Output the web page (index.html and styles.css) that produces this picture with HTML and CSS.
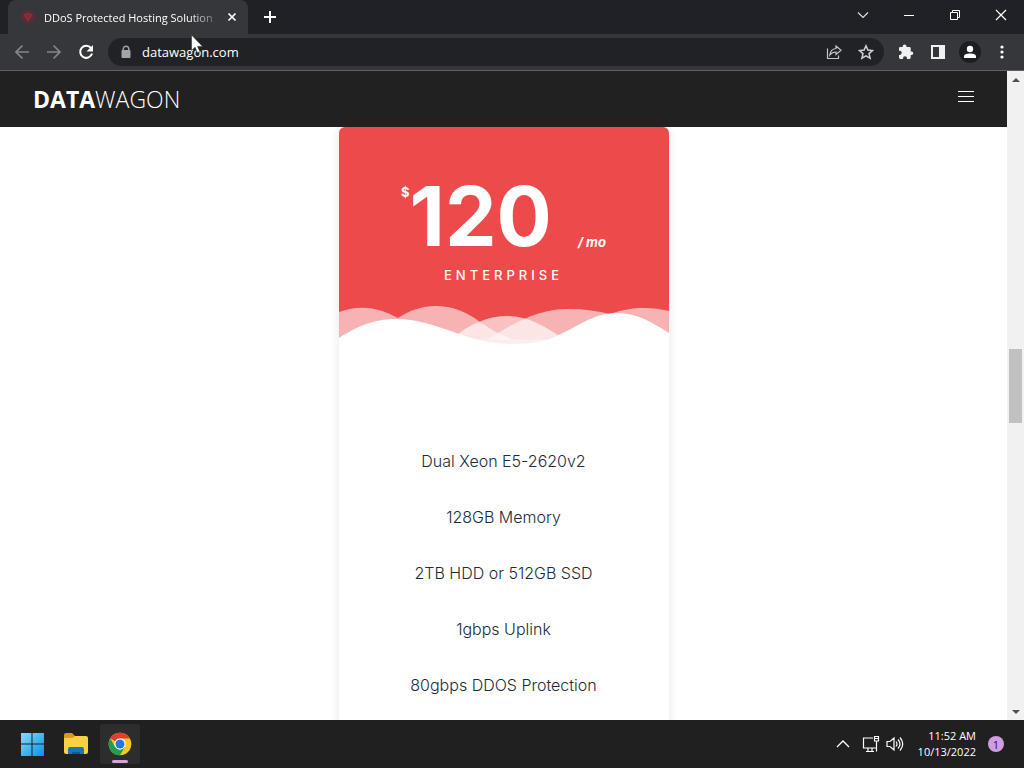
FILE: index.html
```html
<!DOCTYPE html>
<html lang="en">
<head>
<meta charset="utf-8">
<meta name="viewport" content="width=device-width, initial-scale=1">
<title>DDoS Protected Hosting Solution</title>
<link rel="stylesheet" href="styles.css">
</head>
<body>
<div class="tabstrip">
  <div class="tab">
    <svg class="favicon" width="16" height="16" viewBox="0 0 16 16"><circle cx="8" cy="8" r="7" fill="#5c2a32"/><path d="M4 6l4-2 4 2-4 6z" fill="#7d2c38" stroke="#8e3140"/></svg>
    <span class="tab-title">DDoS Protected Hosting Solution</span>
    <button class="icon-btn tab-close" aria-label="Close tab"><svg width="16" height="16" viewBox="0 0 16 16"><path d="M4.5 4.5l7 7m0-7l-7 7" stroke="#fff" stroke-width="1.7"/></svg></button>
  </div>
  <button class="icon-btn new-tab" aria-label="New tab"><svg width="16" height="16" viewBox="0 0 16 16"><path d="M8 2v12M2 8h12" stroke="#fff" stroke-width="2"/></svg></button>
  <div class="window-controls">
    <button class="icon-btn" aria-label="Search tabs"><svg width="12" height="12" viewBox="0 0 12 12"><path d="M1 3.500l5 5 5-5" fill="none" stroke="#ddd" stroke-width="1.2"/></svg></button>
    <button class="icon-btn" aria-label="Minimize"><svg width="12" height="12" viewBox="0 0 12 12"><path d="M1 6.500h10" stroke="#fff"/></svg></button>
    <button class="icon-btn" aria-label="Restore"><svg width="12" height="12" viewBox="0 0 12 12"><path d="M1.500 3.500h7v7h-7zM3.500 3.500v-2h7v7h-2" fill="none" stroke="#fff"/></svg></button>
    <button class="icon-btn" aria-label="Close"><svg width="12" height="12" viewBox="0 0 12 12"><path d="M1 1l10 10M11 1L1 11" stroke="#fff" stroke-width="1.2"/></svg></button>
  </div>
</div>

<div class="toolbar">
  <button class="icon-btn" aria-label="Back"><svg width="16" height="16" viewBox="0 0 16 16"><path d="M15 8H2m6.500-6.500L2 8l6.500 6.500" fill="none" stroke="#85868a" stroke-width="1.7"/></svg></button>
  <button class="icon-btn" aria-label="Forward"><svg width="16" height="16" viewBox="0 0 16 16"><path d="M1 8h13M7.500 1.500L14 8l-6.500 6.500" fill="none" stroke="#85868a" stroke-width="1.700"/></svg></button>
  <button class="icon-btn" aria-label="Reload"><svg width="16" height="16" viewBox="0 0 16 16"><path d="M13 4.200A6 6 0 1 0 14 9.500" fill="none" stroke="#fff" stroke-width="2"/><path d="M15 1v6.500H8.500z" fill="#fff"/></svg></button>
  <form class="omnibox">
    <svg class="lock" width="12" height="14" viewBox="0 0 12 14"><path d="M3.200 6V4a2.800 2.800 0 0 1 5.600 0v2" fill="none" stroke="#a2a4a7" stroke-width="1.400"/><rect x="1.500" y="5" width="9" height="8" rx="1" fill="#a2a4a7"/></svg>
    <input class="address" type="text" aria-label="Address" value="datawagon.com">
    <button type="button" class="icon-btn" aria-label="Share"><svg width="16" height="16" viewBox="0 0 16 16"><path d="M1.500 4.500v10h11v-3M10 2l5 4.300-5 4.200V8Q6 8 3.800 11 4.500 5 10 4.500z" fill="none" stroke="#c4c6c9" stroke-width="1.200"/></svg></button>
    <button type="button" class="icon-btn" aria-label="Bookmark this page"><svg width="16" height="16" viewBox="0 0 16 16"><path d="M8 1.800l1.900 4.300 4.600.4-3.500 3.100 1.100 4.600L8 11.800l-4.100 2.400L5 9.600 1.500 6.500l4.600-.4z" fill="none" stroke="#d0d2d5" stroke-width="1.500"/></svg></button>
  </form>
  <button class="icon-btn" aria-label="Extensions"><svg width="16" height="16" viewBox="0 0 16 16"><path d="M13.500 7.500h-.8V4.300c0-.8-.6-1.400-1.400-1.400H8.500v-.6a1.900 1.900 0 0 0-3.800 0v.6H2.300C1.500 2.900 1 3.500 1 4.300v2.500h.7a2 2 0 0 1 0 4.100H1v2.700c0 .8.600 1.400 1.400 1.400H5v-.8a2 2 0 0 1 4 0v.8h2.300c.8 0 1.400-.6 1.400-1.400v-2.500h.8a1.800 1.800 0 0 0 0-3.600z" fill="#f0f1f3"/></svg></button>
  <button class="icon-btn" aria-label="Side panel"><svg width="16" height="16" viewBox="0 0 16 16"><path fill-rule="evenodd" d="M1 1h14v14H1zM3 3v10h6V3z" fill="#f0f1f3"/></svg></button>
  <button class="icon-btn profile" aria-label="Profile"><svg width="14" height="14" viewBox="0 0 14 14"><circle cx="7" cy="4" r="3.200" fill="#fff"/><path d="M1 13v-1.500C1 9.300 4 8.500 7 8.500s6 .8 6 3V13z" fill="#fff"/></svg></button>
  <button class="icon-btn" aria-label="Menu"><svg width="16" height="16" viewBox="0 0 16 16"><g fill="#fff"><circle cx="8" cy="3" r="1.600"/><circle cx="8" cy="8" r="1.600"/><circle cx="8" cy="13" r="1.600"/></g></svg></button>
</div>

<div class="viewport">
  <div class="page">
    <header class="site-header">
      <a class="brand" href="#"><strong>DATA</strong>WAGON</a>
      <button class="icon-btn" aria-label="Open navigation"><svg width="16" height="12" viewBox="0 0 16 12"><path d="M0 .5h16M0 5.500h16M0 10.500h16" stroke="#fff"/></svg></button>
    </header>
    <main class="plans">
      <article class="plan">
        <div class="plan-head">
          <div class="price"><span class="currency">$</span><span class="amount">120</span><em class="period">/ mo</em></div>
          <h2 class="plan-name">ENTERPRISE</h2>
          <svg class="waves" viewBox="0 0 330 46">
            <path d="M0 12C19 5 38 6 59 18 82 3 112 0 141 22c12 8 22 14 34 18v2H0z" fill="#fff" fill-opacity=".58"/>
            <path d="M148 42v-2C178 20 204 8 231 9c14 0 28 2 40 5 22-8 42-7 59-3v31z" fill="#fff" fill-opacity=".58"/>
            <path d="M112 42v-2C130 23 151 16 168 16c21 0 38 10 58 24v2z" fill="#fff" fill-opacity=".66"/>
            <path d="M0 38C23 23 39 19 58 19c30 0 62 17 82 21h68c31-12 44-27 70-27 21 0 36 10 52 20v14H0z" fill="#fff"/>
            <path d="M138 39.500q36 9 72 0z" fill="#fdeeee"/>
          </svg>
        </div>
        <ul class="specs">
          <li>Dual Xeon E5-2620v2</li>
          <li>128GB Memory</li>
          <li>2TB HDD or 512GB SSD</li>
          <li>1gbps Uplink</li>
          <li>80gbps DDOS Protection</li>
        </ul>
      </article>
    </main>
  </div>
  <div class="scrollbar">
    <button class="icon-btn scroll-arrow" aria-label="Scroll up"><svg width="8" height="4" viewBox="0 0 8 4"><path d="M0 4l4-4 4 4z" fill="#505050"/></svg></button>
    <div class="track-before"></div>
    <div class="thumb"></div>
    <div class="track-after"></div>
    <button class="icon-btn scroll-arrow" aria-label="Scroll down"><svg width="8" height="4" viewBox="0 0 8 4"><path d="M0 0l4 4 4-4z" fill="#505050"/></svg></button>
  </div>
</div>

<footer class="taskbar">
  <button class="icon-btn task" aria-label="Start"><svg width="24" height="24" viewBox="0 0 24 24"><defs><linearGradient id="win" x2="1" y2="1"><stop stop-color="#7ee0fb"/><stop offset="1" stop-color="#0c8ee6"/></linearGradient></defs><path d="M1 1h10.500v10.500H1zM12.500 1H24v10.500H12.500zM1 12.500h10.500V24H1zM12.500 12.500H24V24H12.500z" fill="url(#win)"/></svg></button>
  <button class="icon-btn task" aria-label="File Explorer"><svg width="26" height="24" viewBox="0 0 26 24"><path d="M1 3q0-2 2-2h6l3 3v5H1z" fill="#d99a16"/><path d="M1 6l9-.2L12 4h11q2 0 2 2v14q0 2-2 2H3q-2 0-2-2z" fill="#fbd044"/><path d="M5 22v-5q0-2 2-2h12q2 0 2 2v5z" fill="#1976bd"/><path d="M9 22v-2h8v2z" fill="#125a91"/></svg></button>
  <button class="icon-btn task active" aria-label="Google Chrome"><svg width="24" height="24" viewBox="0 0 24 24"><circle cx="12" cy="12" r="11.300" fill="#fbc91c"/><path d="M12 12L2.200 6.300A11.300 11.300 0 0 1 21.800 6.400H12z" fill="#e33b2e"/><path d="M2.200 6.300A11.300 11.300 0 0 0 12 23.300l5-8.500L12 12 7.100 14.800z" fill="#269b4b"/><circle cx="12" cy="12" r="5.700" fill="#fff"/><circle cx="12" cy="12" r="4.500" fill="#2476e5"/></svg></button>
  <div class="tray">
    <button class="icon-btn" aria-label="Show hidden icons"><svg width="14" height="8" viewBox="0 0 14 8"><path d="M1 7l6-6 6 6" fill="none" stroke="#fff" stroke-width="1.300"/></svg></button>
    <button class="icon-btn tray-status" aria-label="Network and volume">
      <svg width="18" height="18" viewBox="0 0 18 18"><path d="M11 3H1.500v10H14M4 16.500h8M6 13v3M10 13v3M14.500 6v10.500M12.500 1.500h4V6h-4zM12.500 3.500h4" fill="none" stroke="#fff" stroke-width="1.200"/></svg>
      <svg width="18" height="16" viewBox="0 0 18 16"><path d="M1 5.500h3L8 2v12l-4-3.500H1zM10 5.500q2 2.500 0 5M12 3.500q4 4.500 0 9M14 1.500q5.500 6.500 0 13" fill="none" stroke="#fff" stroke-width="1.200"/></svg>
    </button>
    <div class="clock"><time>11:52 AM</time><time>10/13/2022</time></div>
    <button class="icon-btn badge" aria-label="1 notification">1</button>
  </div>
</footer>

<svg class="cursor" width="14" height="20" viewBox="0 0 14 20"><path d="M1.500 1v15.500l3.600-3.200 2.400 5.500 2.500-1.100-2.400-5.300h5z" fill="#fff" stroke="#333" stroke-width=".6"/></svg>
</body>
</html>
```
FILE: styles.css
```css
* { box-sizing: border-box; }

body {
  margin: 0;
  height: 100vh;
  display: flex;
  flex-direction: column;
  overflow: hidden;
  background: #fff;
  font-family: "Open Sans", "Noto Sans", sans-serif;
  font-size: 11px;
  color: #fff;
}

.icon-btn {
  display: inline-flex;
  align-items: center;
  justify-content: center;
  flex: none;
  margin: 0;
  padding: 0;
  border: 0;
  background: none;
  color: inherit;
  font: inherit;
}

/* Browser chrome */
.tabstrip {
  display: flex;
  flex: none;
  height: 34px;
  padding-left: 8px;
  background: #202126;
}
.tab {
  display: flex;
  align-items: center;
  width: 240px;
  padding: 0 8px 0 12px;
  gap: 8px;
  border-radius: 8px 8px 0 0;
  background: #36373b;
}
.favicon { flex: none; }
.tab-title {
  flex: 1;
  margin-right: -8px;
  white-space: nowrap;
  mask-image: linear-gradient(to right, #000 80%, transparent);
}
.tab-close { width: 16px; }
.new-tab { width: 44px; }
.window-controls {
  display: flex;
  margin-left: auto;
  padding-bottom: 5px;
}
.window-controls .icon-btn { width: 46px; }

.toolbar {
  display: flex;
  flex: none;
  align-items: center;
  height: 37px;
  gap: 16px;
  padding: 0 14px;
  background: #36373b;
  border-bottom: 1px solid #606164;
}
.omnibox {
  display: flex;
  flex: 1;
  align-items: center;
  gap: 16px;
  height: 28px;
  margin-left: -2px;
  margin-right: -2px;
  padding: 0 10px 0 12px;
  border-radius: 14px;
  background: #202226;
}
.lock { flex: none; }
.address {
  flex: 1;
  min-width: 0;
  margin-left: -6px;
  padding: 0;
  border: 0;
  outline: 0;
  background: none;
  color: #fff;
  font: inherit;
  font-size: 13px;
}
.profile {
  width: 22px;
  height: 22px;
  margin: 0 -3px;
  border-radius: 50%;
  background: #1d1e22;
}

/* Website */
.viewport {
  display: flex;
  flex: 1;
  min-height: 0;
}
.page {
  flex: 1;
  min-width: 0;
  overflow: hidden;
}
.site-header {
  display: flex;
  align-items: center;
  justify-content: space-between;
  height: 56px;
  padding: 0 33px 4px;
  background: #212121;
}
.brand {
  color: #fff;
  font-size: 23px;
  font-weight: 300;
  line-height: 32px;
  padding-top: 4px;
  text-decoration: none;
}
.brand strong { font-weight: 700; }

.plans {
  display: flex;
  justify-content: center;
  overflow: hidden;
  font-family: Inter, sans-serif;
}
.plan {
  width: 330px;
  height: 800px;
  border-radius: 8px;
  background: #fff;
  box-shadow: 0 0 6px 3px #f1f1f3;
}
.plan-head {
  padding-top: 40px;
  border-radius: 6px 6px 0 0;
  background: #ed4a4b;
  text-align: center;
}
.price {
  display: flex;
  justify-content: center;
  line-height: 100px;
  font-weight: 700;
}
.currency {
  font-size: 13px;
  line-height: 50px;
}
.amount { font-size: 82px; }
.period {
  margin-left: 26px;
  font-size: 13px;
  line-height: 150px;
  height: 100px;
}
.plan-name {
  margin: 0;
  font-size: 13px;
  font-weight: 500;
  line-height: 16px;
  letter-spacing: 4px;
}
.waves {
  display: block;
  width: 100%;
  margin-top: 17px;
}
.specs {
  margin: 0;
  padding: 87px 0 0;
  list-style: none;
  color: #202c3c;
  font-size: 16px;
  font-weight: 300;
  line-height: 56px;
  text-align: center;
}

.scrollbar {
  display: flex;
  flex-direction: column;
  align-items: center;
  width: 17px;
  background: #f1f1f1;
}
.scroll-arrow {
  width: 17px;
  height: 17px;
}
.track-before { flex: 261; }
.thumb {
  width: 13px;
  height: 74px;
  background: #c1c1c1;
}
.track-after { flex: 280; }

/* Desktop taskbar */
.taskbar {
  display: flex;
  flex: none;
  align-items: center;
  height: 48px;
  gap: 4px;
  padding: 0 20px 0 12px;
  background: #202020;
}
.task {
  position: relative;
  width: 40px;
  height: 40px;
  border-radius: 4px;
}
.task.active { background: #2d2d2d; }
.task.active::after {
  content: "";
  position: absolute;
  bottom: 1px;
  left: 12px;
  width: 16px;
  height: 3px;
  border-radius: 2px;
  background: #d3a4dc;
}
.tray {
  display: flex;
  align-items: center;
  margin-left: auto;
  gap: 12px;
}
.tray-status { gap: 6px; }
.clock {
  display: flex;
  flex-direction: column;
  min-width: 60px;
  line-height: 16px;
  text-align: right;
}
.badge {
  width: 16px;
  height: 16px;
  border-radius: 50%;
  background: #d49be0;
  color: #222;
}

.cursor {
  position: absolute;
  left: 190px;
  top: 34px;
}
```
